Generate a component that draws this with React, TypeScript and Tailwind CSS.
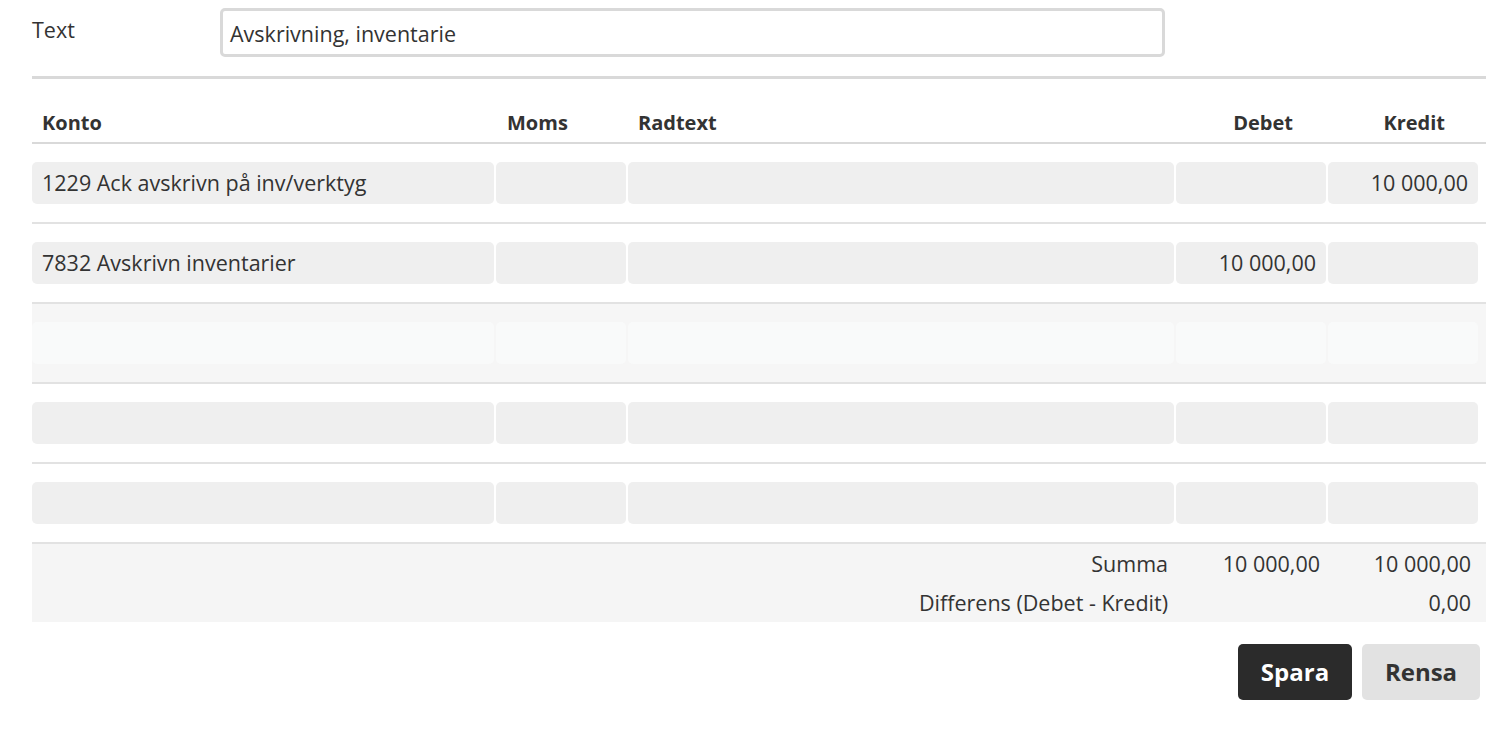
import { type FC } from "react"

type Row = {
  konto?: string
  debet?: string
  kredit?: string
  highlight?: boolean
}

const rows: Row[] = [
  { konto: "1229 Ack avskrivn på inv/verktyg", kredit: "10 000,00" },
  { konto: "7832 Avskrivn inventarier", debet: "10 000,00" },
  { highlight: true },
  {},
  {}
]

const grid = "grid grid-cols-[462px_130px_546px_150px_150px] gap-x-[2px]"

const Cell: FC<{ value?: string; right?: boolean; light?: boolean }> = ({
  value,
  right,
  light
}) => (
  <div
    className={`h-[42px] rounded-[5px] flex items-center px-[10px] ${
      light ? "bg-[#f9fafa]" : "bg-[#efefef]"
    } ${right ? "justify-end" : "justify-start"}`}>
    {value}
  </div>
)

const LedgerRow: FC<Row> = (props) => (
  <div
    className={`border-b-2 border-[#e2e2e2] py-[18px] pr-[8px] ${
      props.highlight ? "bg-[#f6f6f6]" : ""
    }`}>
    <div className={grid}>
      <Cell value={props.konto} light={props.highlight} />
      <Cell light={props.highlight} />
      <Cell light={props.highlight} />
      <Cell value={props.debet} right light={props.highlight} />
      <Cell value={props.kredit} right light={props.highlight} />
    </div>
  </div>
)

export default function App() {
  return (
    <div
      className="min-h-screen bg-white text-[#333] text-[21.5px] pl-[32px] pr-[20px] pt-[8px]"
      style={{ fontFamily: '"Open Sans", "Noto Sans", sans-serif' }}>
      <div className="w-[1454px]">
        <div className="flex items-start">
          <div className="w-[188px] pt-[8px] leading-[28px]">Text</div>
          <div className="w-[945px] h-[49px] border-[3px] border-[#d9d9d9] rounded-[5px] flex items-center pl-[7px] pt-[3px]">
            Avskrivning, inventarie
          </div>
        </div>

        <div className="mt-[19px] h-[3px] bg-[#d9d9d9]" />

        <div className="border-b-2 border-[#d9d9d9] pt-[30px] pb-[5px] pr-[8px] text-[20px] font-bold leading-[28px]">
          <div className={grid}>
            <div className="px-[10px]">Konto</div>
            <div className="px-[11px]">Moms</div>
            <div className="px-[10px]">Radtext</div>
            <div className="text-right pr-[33px]">Debet</div>
            <div className="text-right pr-[33px]">Kredit</div>
          </div>
        </div>

        {rows.map((r, i) => (
          <LedgerRow key={i} {...r} />
        ))}

        <div className="bg-[#f5f5f5] pr-[8px]">
          <div className={`${grid} h-[40px] items-center`}>
            <div className="col-span-3 text-right pr-[6px]">Summa</div>
            <div className="text-right pr-[6px]">10 000,00</div>
            <div className="text-right pr-[7px]">10 000,00</div>
          </div>
          <div className={`${grid} h-[38px] items-center`}>
            <div className="col-span-3 text-right pr-[6px]">
              Differens (Debet - Kredit)
            </div>
            <div />
            <div className="text-right pr-[7px]">0,00</div>
          </div>
        </div>

        <div className="flex justify-end gap-[10px] mt-[22px] pr-[6px]">
          <button className="h-[56px] w-[114px] rounded-[5px] bg-[#2b2b2b] text-white text-[24px] font-bold">
            Spara
          </button>
          <button className="h-[56px] w-[118px] rounded-[5px] bg-[#e2e2e2] text-[#333] text-[24px] font-bold">
            Rensa
          </button>
        </div>
      </div>
    </div>
  )
}
